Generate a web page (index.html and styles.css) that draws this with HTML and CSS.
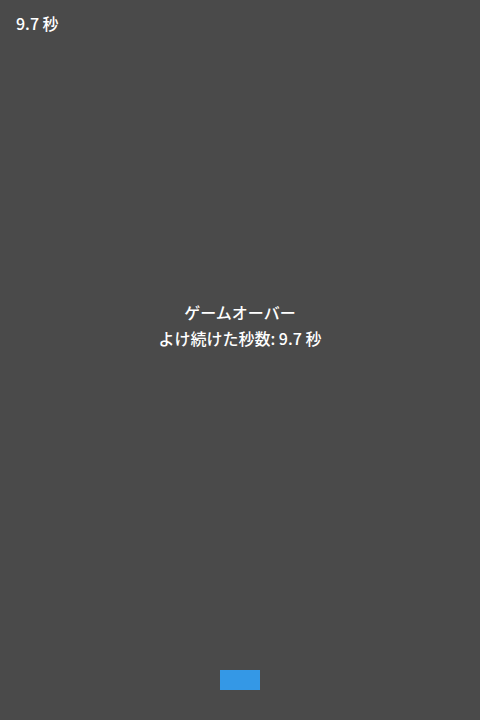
FILE: index.html
```html
<!DOCTYPE html>
<html lang="ja">
<head>
<meta charset="utf-8">
<link rel="stylesheet" href="styles.css">
</head>
<body>
<div class="game">
  <div class="score">9.7 秒</div>
  <div class="center">
    <div class="title">ゲームオーバー</div>
    <div class="result">よけ続けた秒数: 9.7 秒</div>
  </div>
  <div class="bottom"><div class="player"></div></div>
</div>
</body>
</html>
```
FILE: styles.css
```css
html, body {
  margin: 0;
  padding: 0;
  background: #4a4a4a;
}
.game {
  width: 480px;
  height: 720px;
  display: flex;
  flex-direction: column;
  color: #ffffff;
  font-family: "Noto Sans CJK JP", "Noto Sans", sans-serif;
  font-weight: 500;
  font-size: 16px;
}
.score {
  padding: 11px 16px 0;
  line-height: 24px;
}
.center {
  flex: 1;
  display: flex;
  flex-direction: column;
  align-items: center;
  justify-content: center;
  line-height: 26px;
  padding-bottom: 56px;
}
.bottom {
  display: flex;
  justify-content: center;
  padding-bottom: 30px;
}
.player {
  width: 40px;
  height: 20px;
  background: #3498e6;
}
```
